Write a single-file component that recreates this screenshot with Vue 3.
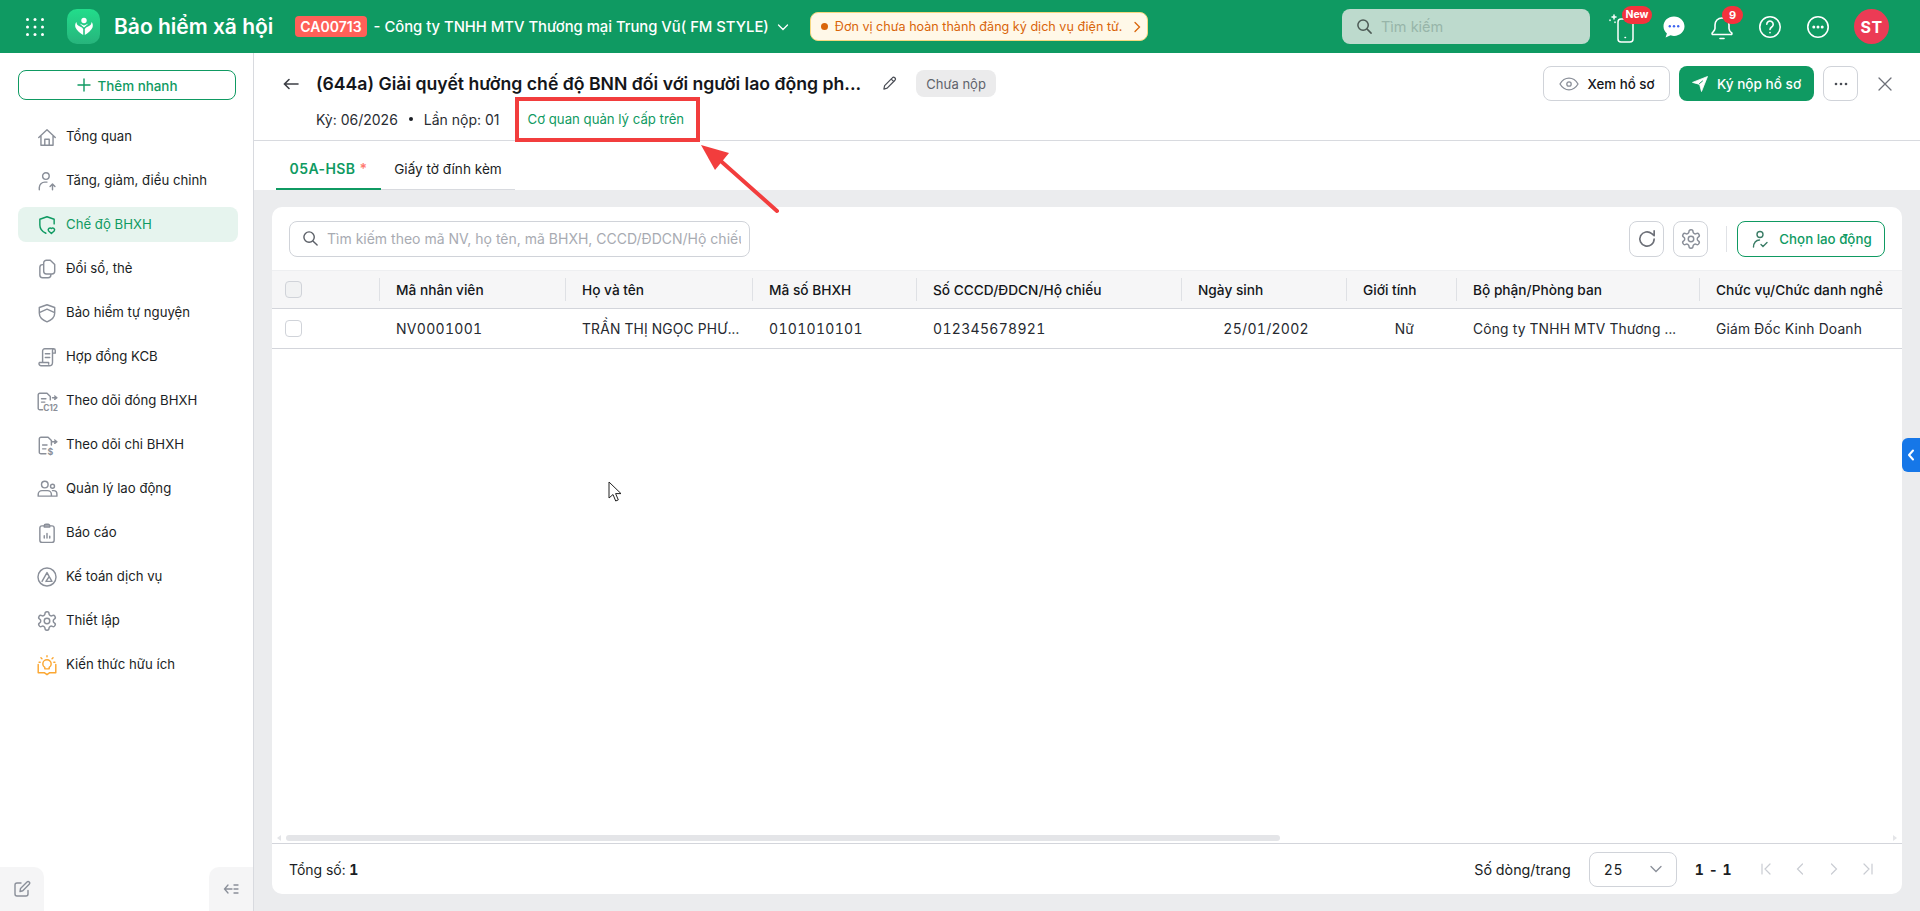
<script setup>
const gear = '<g transform="scale(.833)" stroke-width="1.600"><path d="M12.220 2h-.440a2 2 0 0 0-2 2v.180a2 2 0 0 1-1 1.730l-.430.250a2 2 0 0 1-2 0l-.150-.080a2 2 0 0 0-2.730.730l-.220.380a2 2 0 0 0 .730 2.730l.150.100a2 2 0 0 1 1 1.720v.510a2 2 0 0 1-1 1.740l-.150.090a2 2 0 0 0-.730 2.730l.220.380a2 2 0 0 0 2.730.730l.150-.080a2 2 0 0 1 2 0l.430.250a2 2 0 0 1 1 1.730V20a2 2 0 0 0 2 2h.440a2 2 0 0 0 2-2v-.180a2 2 0 0 1 1-1.730l.430-.250a2 2 0 0 1 2 0l.150.080a2 2 0 0 0 2.730-.730l.220-.390a2 2 0 0 0-.730-2.730l-.150-.080a2 2 0 0 1-1-1.740v-.500a2 2 0 0 1 1-1.740l.150-.090a2 2 0 0 0 .730-2.730l-.220-.380a2 2 0 0 0-2.730-.730l-.150.080a2 2 0 0 1-2 0l-.430-.250a2 2 0 0 1-1-1.730V4a2 2 0 0 0-2-2z"/><circle cx="12" cy="12" r="3"/></g>';

const menu = [
  { label: 'Tổng quan', icon: '<path d="M2.500 10.500 10 3.500l7.500 7M4.500 9v8.500h11V9M8 17.500v-5.500h4v5.500"/>' },
  { label: 'Tăng, giảm, điều chỉnh', icon: '<circle cx="9" cy="5.500" r="3"/><path d="M3 18v-2a5 5 0 0 1 5-5h2M15 18v-5M12.800 15l2.200-2.200 2.200 2.200"/>' },
  { label: 'Chế độ BHXH', active: true, icon: '<path d="M9 17.500C5.500 16 3.500 13.500 3.500 10V4.800L10 2.500l6.500 2.300V9"/><path d="M14 17.800l-2.700-2.600a1.700 1.700 0 0 1 2.700-2 1.700 1.700 0 0 1 2.700 2z"/>' },
  { label: 'Đổi sổ, thẻ', icon: '<path d="M7 4.500A2.500 2.500 0 0 1 9.500 2H13l4 4v6a2.500 2.500 0 0 1-2.500 2.500H9.500A2.500 2.500 0 0 1 7 12zM7 6H6a2.500 2.500 0 0 0-2.500 2.500v7A2.500 2.500 0 0 0 6 18h5a2.500 2.500 0 0 0 2.500-2.500v-1"/>' },
  { label: 'Bảo hiểm tự nguyện', icon: '<path d="M10 2.500 17 5v5c0 4-3 6.500-7 8-4-1.500-7-4-7-8V5z"/><path d="M3.500 9.500 10 6.500l6.500 3"/>' },
  { label: 'Hợp đồng KCB', icon: '<path d="M6 15V4.500A2 2 0 0 1 8 2.500h8a1.500 1.500 0 0 1 1.500 1.500v2.500H15V4M16 2.500a1.500 1.500 0 0 0-1 1.500v11a3 3 0 0 1-3 3H4.500A2 2 0 0 1 3 15h8.500v1.500M8.500 7h4M8.500 10.500h4"/>' },
  { label: 'Theo dõi đóng BHXH', icon: '<path d="M6 18H3.500A1.500 1.500 0 0 1 2 16.500v-12A1.500 1.500 0 0 1 3.500 3H10l3 3v3M5 8h4M5 11h3M15 7h4M17 5.500 19 7l-2 1.500"/><text x="6.500" y="19" font-size="7.500" font-weight="700" fill="currentColor" stroke="none" font-family="Inter, sans-serif">C12</text>' },
  { label: 'Theo dõi chi BHXH', icon: '<path d="M9 18H4.500A1.500 1.500 0 0 1 3 16.500v-12A1.500 1.500 0 0 1 4.500 3H11l3 3v4M6 10h4M6 13.500h3M15 7h4M17 5.500 19 7l-2 1.500"/><text x="10.500" y="19.500" font-size="8" font-weight="700" fill="currentColor" stroke="none" font-family="Inter, sans-serif">$</text>' },
  { label: 'Quản lý lao động', icon: '<circle cx="8" cy="6" r="3"/><circle cx="15" cy="7.500" r="1.800"/><path d="M2 16.500V15a3.500 3.500 0 0 1 3.500-3.500h5A3.500 3.500 0 0 1 14 15v1.500zM15 11.500h1A3 3 0 0 1 19 14.500v2h-5"/>' },
  { label: 'Báo cáo', icon: '<rect x="3.500" y="3.500" width="13" height="15" rx="2"/><path d="M7.500 3.500a1.500 1.500 0 0 1 1.500-1.500h2a1.500 1.500 0 0 1 1.500 1.500v1h-5zM7.500 14.500v-2M10 14.500v-4M12.500 14.500v-1.500"/>' },
  { label: 'Kế toán dịch vụ', icon: '<circle cx="10" cy="10" r="8.200"/><path d="M5.500 14 10 6l2 3.600-3 4.400M10 14h4.500L12 9.600"/>' },
  { label: 'Thiết lập', icon: gear },
  { label: 'Kiến thức hữu ích', warm: true, icon: '<path d="M2 9.500V17h5.500l2.500 1.800 2.500-1.800H18V9.500"/><path d="M8 13.500v-1.300A3.800 3.800 0 0 1 6.200 9a3.800 3.800 0 0 1 7.600 0 3.800 3.800 0 0 1-1.800 3.200v1.300z"/><path d="M10 1.500v1M4.500 3.500l.900.900M15.500 3.500l-.900.900M2.800 7.500h1M16.200 7.500h1"/>' }
];

const columns = [
  { key: 'select', width: 108 },
  { key: 'code', label: 'Mã nhân viên', value: 'NV0001001', width: 186 },
  { key: 'name', label: 'Họ và tên', value: 'TRẦN THỊ NGỌC PHƯ...', width: 187 },
  { key: 'bhxh', label: 'Mã số BHXH', value: '0101010101', width: 164 },
  { key: 'cccd', label: 'Số CCCD/ĐDCN/Hộ chiếu', value: '012345678921', width: 265 },
  { key: 'dob', label: 'Ngày sinh', value: '25/01/2002', width: 165 },
  { key: 'sex', label: 'Giới tính', value: 'Nữ', width: 110 },
  { key: 'dept', label: 'Bộ phận/Phòng ban', value: 'Công ty TNHH MTV Thương ...', width: 243 },
  { key: 'job', label: 'Chức vụ/Chức danh nghề', value: 'Giám Đốc Kinh Doanh', width: 202 }
];
</script>

<template>
  <div class="app">
    <header class="topbar">
      <svg class="grid-ico" width="18" height="18" viewBox="0 0 18 18" fill="#fff">
        <template v-for="y in [1.500, 9, 16.500]" :key="y">
          <circle v-for="x in [1.500, 9, 16.500]" :key="x" :cx="x" :cy="y" r="1.500" />
        </template>
      </svg>
      <div class="logo">
        <svg width="22" height="22" viewBox="0 0 22 22" fill="#fff">
          <circle cx="11" cy="4.500" r="2.700" />
          <path d="M3.500 6c0 2 .8 3.200 2.500 4l3 1.500 1.200 1.500v6C7 17 4 14.500 2.500 11.500 1.800 9.500 2.200 7 3.500 6z" />
          <path d="M18.500 6c0 2-.8 3.200-2.500 4l-3 1.500-1.200 1.500v6c3.200-2 6.200-4.500 7.700-7.500.7-2 .3-4.500-1-5.500z" />
          <path d="M6.500 7.500 11 9.500l4.500-2-4.500 4z" />
        </svg>
      </div>
      <span class="brand">Bảo hiểm xã hội</span>
      <span class="code-badge">CA00713</span>
      <span class="company">- Công ty TNHH MTV Thương mại Trung Vũ( FM STYLE)</span>
      <svg class="company-chevron" width="12" height="12" viewBox="0 0 12 12" fill="none" stroke="#fff" stroke-width="1.300" stroke-linecap="round"><path d="M1.500 4 6 8.500 10.500 4" /></svg>
      <div class="notice">
        <span class="notice-dot"></span>
        <span>Đơn vị chưa hoàn thành đăng ký dịch vụ điện tử.</span>
        <svg width="10" height="12" viewBox="0 0 10 12" fill="none" stroke="#d9650a" stroke-width="1.300" stroke-linecap="round"><path d="M3 1.500 7.500 6 3 10.500" /></svg>
      </div>

      <div class="top-search">
        <svg width="17" height="17" viewBox="0 0 18 18" fill="none" stroke="#4d5a55" stroke-width="1.600" stroke-linecap="round"><circle cx="7.500" cy="7.500" r="5.500" /><path d="m11.800 11.800 4.200 4.200" /></svg>
        <span>Tìm kiếm</span>
      </div>

      <div class="top-icons">
        <div class="top-icon phone">
          <svg width="34" height="36" viewBox="0 0 34 36" fill="none" stroke="#fff" stroke-width="1.500" stroke-linecap="round">
            <rect x="9" y="10" width="15" height="23" rx="3" />
            <path d="M16 28.500h.5M5 6v4M3 8h4M1 11v.5M6 13v.5" />
          </svg>
          <span class="pill new">New</span>
        </div>
        <div class="top-icon chat">
          <svg width="26" height="26" viewBox="0 0 26 26">
            <path fill="#fff" d="M13 2.500C6.900 2.500 2.500 6.800 2.500 12.300c0 3 1.300 5.500 3.400 7.300l-1.300 3.900 5-2.200c1.200.4 2.500.6 3.400.6 6.100 0 10.500-4.400 10.500-9.600S19.100 2.500 13 2.500z" />
            <circle cx="8.800" cy="12.300" r="1.200" fill="#3c63f0" /><circle cx="13" cy="12.300" r="1.200" fill="#3c63f0" /><circle cx="17.200" cy="12.300" r="1.200" fill="#3c63f0" />
          </svg>
        </div>
        <div class="top-icon bell">
          <svg width="26" height="30" viewBox="0 0 26 30" fill="none" stroke="#fff" stroke-width="1.600" stroke-linecap="round" stroke-linejoin="round">
            <path d="M13 6c-4.200 0-7 3-7 7v3.500c0 1.500-1.500 3-2.800 4.500-.4.700 0 1.500.8 1.500h18c.8 0 1.200-.8.800-1.500C20.500 19.500 20 18 20 16.500V13c0-4-2.800-7-7-7z" />
            <path d="M11 26.500h4" />
          </svg>
          <span class="pill count">9</span>
        </div>
        <div class="top-icon">
          <svg width="26" height="26" viewBox="0 0 26 26" fill="none" stroke="#fff" stroke-width="1.600" stroke-linecap="round">
            <circle cx="13" cy="13" r="10.200" />
            <path d="M9.800 10.300a3.200 3.200 0 1 1 4.900 2.700c-1 .7-1.700 1.300-1.700 2.500" />
            <path d="M13 18.500v.3" />
          </svg>
        </div>
        <div class="top-icon">
          <svg width="26" height="26" viewBox="0 0 26 26" fill="none" stroke="#fff" stroke-width="1.600">
            <circle cx="13" cy="13" r="10.200" />
            <circle cx="8.800" cy="13" r=".7" fill="#fff" /><circle cx="13" cy="13" r=".7" fill="#fff" /><circle cx="17.200" cy="13" r=".7" fill="#fff" />
          </svg>
        </div>
      </div>
      <div class="avatar">ST</div>
    </header>

    <div class="body">
      <aside class="sidebar">
        <button class="quick-add">
          <svg width="14" height="14" viewBox="0 0 14 14" stroke="#0f9a62" stroke-width="1.400" stroke-linecap="round"><path d="M7 1v12M1 7h12" /></svg>
          <span>Thêm nhanh</span>
        </button>
        <nav class="menu">
          <div v-for="item in menu" :key="item.label" class="menu-item" :class="{ active: item.active, warm: item.warm }">
            <svg class="menu-ico" width="22" height="22" viewBox="0 0 20 20" fill="none" stroke="currentColor" stroke-width="1.300" stroke-linecap="round" stroke-linejoin="round" v-html="item.icon"></svg>
            <span>{{ item.label }}</span>
          </div>
        </nav>
        <div class="side-foot">
          <div class="foot-btn left">
            <svg width="18" height="18" viewBox="0 0 18 18" fill="none" stroke="#8a8f99" stroke-width="1.400" stroke-linecap="round" stroke-linejoin="round"><path d="M8 3H4a2 2 0 0 0-2 2v9a2 2 0 0 0 2 2h9a2 2 0 0 0 2-2v-3.500" /><path d="M7 11.500 7.500 8.500 14 2a1.500 1.500 0 0 1 2.200 2.200L9.800 10.800z" /></svg>
          </div>
          <div class="foot-btn right">
            <svg width="16" height="14" viewBox="0 0 16 14" fill="none" stroke="#8a8f99" stroke-width="1.300" stroke-linecap="round"><path d="M5 3 1.500 7 5 11M2 7h7M11 3h4M11 7h4M11 11h4" /></svg>
          </div>
        </div>
      </aside>

      <main class="main">
        <section class="doc-head">
          <div class="doc-row">
            <svg class="back" width="16" height="12" viewBox="0 0 16 12" fill="none" stroke="#3c3f45" stroke-width="1.600" stroke-linecap="round"><path d="M15 6H1.500M6 1.500 1.500 6 6 10.500" /></svg>
            <h1 class="doc-title">(644a) Giải quyết hưởng chế độ BNN đối với người lao động ph...</h1>
            <svg class="pen" width="15" height="15" viewBox="0 0 16 16" fill="none" stroke="#4a4d55" stroke-width="1.300" stroke-linejoin="round"><path d="M2 14l.8-3.800L11 2a1.700 1.700 0 0 1 2.800 2.500L5.500 13z" /><path d="M9.800 3.300l2.900 2.700" /></svg>
            <span class="status">Chưa nộp</span>
            <div class="doc-actions">
              <button class="btn outline">
                <svg width="20" height="14" viewBox="0 0 20 14" fill="none" stroke="#8a8f99" stroke-width="1.300"><path d="M1 7c2.200-3.800 5.300-5.800 9-5.800s6.800 2 9 5.800c-2.200 3.800-5.300 5.800-9 5.800S3.200 10.800 1 7z" /><circle cx="10" cy="7" r="2.200" /></svg>
                Xem hồ sơ
              </button>
              <button class="btn primary">
                <svg width="16" height="16" viewBox="0 0 16 16" fill="#fff"><path d="M15.500.5 9.500 15.500 7.600 8.400.5 6.400z" stroke="#fff" stroke-width=".8" stroke-linejoin="round" /><path d="M7.200 7.800l3.600-3" stroke="#0f9a62" stroke-width="1" /></svg>
                Ký nộp hồ sơ
              </button>
              <button class="btn outline square">
                <svg width="14" height="4" viewBox="0 0 14 4" fill="#4a4d55"><circle cx="2" cy="2" r="1.300" /><circle cx="7" cy="2" r="1.300" /><circle cx="12" cy="2" r="1.300" /></svg>
              </button>
              <svg class="close" width="14" height="14" viewBox="0 0 14 14" stroke="#6d7078" stroke-width="1.300" stroke-linecap="round"><path d="M1 1l12 12M13 1 1 13" /></svg>
            </div>
          </div>
          <div class="doc-meta">
            <span>Kỳ: 06/2026</span>
            <span class="bullet"></span>
            <span>Lần nộp: 01</span>
            <a class="parent-link">Cơ quan quản lý cấp trên</a>
          </div>
        </section>

        <div class="tabs">
          <div class="tab on">05A-HSB <i>*</i></div>
          <div class="tab">Giấy tờ đính kèm</div>
        </div>

        <div class="content">
          <section class="card">
            <div class="toolbar">
              <div class="search">
                <svg width="17" height="17" viewBox="0 0 18 18" fill="none" stroke="#5c6068" stroke-width="1.500" stroke-linecap="round"><circle cx="7.500" cy="7.500" r="5.500" /><path d="m11.800 11.800 4.200 4.200" /></svg>
                <span>Tìm kiếm theo mã NV, họ tên, mã BHXH, CCCD/ĐDCN/Hộ chiếu</span>
              </div>
              <button class="tool">
                <svg width="22" height="22" viewBox="0 0 20 20" fill="none" stroke="#6d7078" stroke-width="1.500" stroke-linecap="round" stroke-linejoin="round"><path d="M16.500 10a6.500 6.500 0 1 1-2.200-4.900L16.500 7V2.500" /></svg>
              </button>
              <button class="tool">
                <svg width="22" height="22" viewBox="0 0 20 20" fill="none" stroke="#8a8f99" stroke-linecap="round" stroke-linejoin="round" v-html="gear"></svg>
              </button>
              <span class="tool-sep"></span>
              <button class="btn pick">
                <svg width="20" height="20" viewBox="0 0 20 20" fill="none" stroke-width="1.400" stroke-linecap="round"><circle cx="10" cy="5.500" r="3" stroke="#3b7d67" /><path d="M3.500 18c0-4 2.500-7 6-7" stroke="#3b7d67" /><path d="M11 15.500l2 2 4-4" stroke="#3b7d67" /></svg>
                Chọn lao động
              </button>
            </div>

            <div class="table">
              <div class="thead">
                <div v-for="col in columns" :key="col.key" class="th" :style="{ width: col.width + 'px' }">
                  <span v-if="col.key === 'select'" class="check"></span>
                  <span v-else>{{ col.label }}</span>
                </div>
              </div>
              <div class="tr">
                <div v-for="col in columns" :key="col.key" class="td" :class="col.key" :style="{ width: col.width + 'px' }">
                  <span v-if="col.key === 'select'" class="check"></span>
                  <span v-else>{{ col.value }}</span>
                </div>
              </div>
            </div>

            <div class="scroll">
              <span class="arr l"></span>
              <div class="thumb"></div>
              <span class="arr r"></span>
            </div>

            <footer class="foot">
              <span>Tổng số: <b>1</b></span>
              <div class="pager">
                <span class="per-page">Số dòng/trang</span>
                <div class="size">
                  <span>25</span>
                  <svg width="12" height="8" viewBox="0 0 12 8" fill="none" stroke="#8a8f99" stroke-width="1.300" stroke-linecap="round"><path d="M1 1.500 6 6.500 11 1.500" /></svg>
                </div>
                <b class="range">1 - 1</b>
                <div class="pages">
                  <svg width="12" height="12" viewBox="0 0 12 12" fill="none" stroke="#c9ccd2" stroke-width="1.200" stroke-linecap="round"><path d="M2 1v10M10 1 5 6l5 5" /></svg>
                  <svg width="12" height="12" viewBox="0 0 12 12" fill="none" stroke="#c9ccd2" stroke-width="1.200" stroke-linecap="round"><path d="M8.500 1 3.500 6l5 5" /></svg>
                  <svg width="12" height="12" viewBox="0 0 12 12" fill="none" stroke="#c9ccd2" stroke-width="1.200" stroke-linecap="round"><path d="M3.500 1l5 5-5 5" /></svg>
                  <svg width="12" height="12" viewBox="0 0 12 12" fill="none" stroke="#c9ccd2" stroke-width="1.200" stroke-linecap="round"><path d="M2 1l5 5-5 5M10 1v10" /></svg>
                </div>
              </div>
            </footer>
          </section>
        </div>
      </main>
    </div>

    <!-- overlays: the side handle, the annotation drawn on the screenshot and the mouse pointer -->
    <div class="side-handle">
      <svg width="8" height="12" viewBox="0 0 8 12" fill="none" stroke="#fff" stroke-width="2" stroke-linecap="round" stroke-linejoin="round"><path d="M6 1.500 2 6l4 4.500" /></svg>
    </div>
    <div class="mark-box"></div>
    <svg class="mark-arrow" width="100" height="90" viewBox="0 0 100 90">
      <path d="M77 67 14 11" stroke="#f23d3d" stroke-width="4" stroke-linecap="round" />
      <path d="M1 1 29 9 15 26z" fill="#f23d3d" />
    </svg>
    <svg class="pointer" width="14" height="22" viewBox="0 0 14 22">
      <path d="M1 1v16l4-3.500 2.700 6.500 2.600-1.100-2.700-6.300H13z" fill="#fff" stroke="#222" stroke-width="1" stroke-linejoin="round" />
    </svg>
  </div>
</template>

<style>
html, body {
  margin: 0;
  overflow: hidden;
}
</style>

<style scoped>
.app {
  position: relative;
  display: flex;
  flex-direction: column;
  width: 1920px;
  height: 911px;
  overflow: hidden;
  font-family: Inter, "Noto Sans", sans-serif;
  font-size: 13px;
  color: #1b1e24;
  background: #fff;
}

button {
  font-family: inherit;
  cursor: pointer;
}

/* top bar */
.topbar {
  display: flex;
  align-items: center;
  flex: 0 0 53px;
  height: 53px;
  padding-left: 26px;
  color: #fff;
  background: #0f9a62;
  box-sizing: border-box;
}

.logo {
  display: flex;
  align-items: center;
  justify-content: center;
  width: 33px;
  height: 35px;
  margin-left: 23px;
  border-radius: 10px;
  background: linear-gradient(180deg, #22dd8b 0%, #27b47c 100%);
}

.brand {
  margin-left: 14px;
  font-size: 21px;
  font-weight: 600;
  white-space: nowrap;
}

.code-badge {
  margin-left: 22px;
  padding: 0 5px;
  height: 21px;
  line-height: 21px;
  border-radius: 4px;
  font-size: 14px;
  font-weight: 600;
  background: #ff6058;
}

.company {
  margin-left: 7px;
  font-size: 14.800px;
  font-weight: 500;
  white-space: nowrap;
}

.company-chevron {
  margin-left: 8px;
}

.notice {
  display: flex;
  align-items: center;
  gap: 7px;
  width: 338px;
  height: 29px;
  margin-left: 21px;
  padding-left: 10px;
  border: 1px solid #f5d77f;
  border-radius: 8px;
  box-sizing: border-box;
  font-size: 12.600px;
  color: #d9650a;
  background: #fff8e8;
  white-space: nowrap;
}

.notice svg {
  margin-left: 3px;
}

.notice-dot {
  width: 7px;
  height: 7px;
  border-radius: 50%;
  background: #d9650a;
}

.top-search {
  display: flex;
  align-items: center;
  gap: 8px;
  width: 248px;
  height: 35px;
  margin-left: auto;
  padding-left: 14px;
  box-sizing: border-box;
  border-radius: 8px;
  font-size: 14.500px;
  color: #97b5a9;
  background: #bddacd;
}

.top-icons {
  display: flex;
  align-items: center;
  margin-left: 12px;
}

.top-icon {
  position: relative;
  display: flex;
  align-items: center;
  justify-content: center;
  width: 48px;
  height: 40px;
}

.pill {
  position: absolute;
  display: flex;
  align-items: center;
  justify-content: center;
  color: #fff;
  font-weight: 700;
  background: #f4333d;
}

.pill.new {
  top: -1px;
  left: 20px;
  width: 30px;
  height: 18px;
  border-radius: 9px;
  font-size: 10.500px;
}

.pill.count {
  top: -1px;
  left: 24px;
  width: 21px;
  height: 18px;
  border-radius: 9px;
  font-size: 11px;
}

.avatar {
  display: flex;
  align-items: center;
  justify-content: center;
  width: 35px;
  height: 35px;
  margin: 0 31px 0 12px;
  border-radius: 50%;
  font-size: 16px;
  font-weight: 700;
  letter-spacing: .5px;
  background: #ec3b55;
}

/* sidebar */
.body {
  display: flex;
  flex: 1;
  min-height: 0;
}

.sidebar {
  position: relative;
  display: flex;
  flex-direction: column;
  flex: 0 0 254px;
  padding: 17px 15px 0 18px;
  box-sizing: border-box;
  border-right: 1px solid #d8dadf;
}

.quick-add {
  display: flex;
  align-items: center;
  justify-content: center;
  gap: 7px;
  width: 218px;
  height: 30px;
  padding: 0;
  border: 1px solid #0f9a62;
  border-radius: 8px;
  font-size: 13.400px;
  font-weight: 500;
  color: #0f9a62;
  background: #fff;
}

.quick-add span {
  margin-top: 2px;
}

.menu {
  display: flex;
  flex-direction: column;
  gap: 9px;
  margin-top: 19px;
}

.menu-item {
  display: flex;
  align-items: center;
  gap: 8px;
  width: 220px;
  height: 35px;
  padding-left: 18px;
  box-sizing: border-box;
  border-radius: 8px;
  font-size: 13.200px;
  font-weight: 400;
  color: #8a8f99;
}

.menu-item span {
  margin-top: -2px;
  color: #1b1e24;
}

.menu-item.active {
  color: #0f9a62;
  background: #e6f4ee;
}

.menu-item.active span {
  color: #0f9a62;
}

.menu-item.warm {
  color: #fba732;
}

.side-foot {
  position: absolute;
  left: 0;
  right: 0;
  bottom: 0;
  display: flex;
  justify-content: space-between;
}

.foot-btn {
  display: flex;
  align-items: center;
  justify-content: center;
  width: 44px;
  height: 44px;
  background: #f5f5f6;
}

.foot-btn.left {
  border-top-right-radius: 10px;
}

.foot-btn.right {
  border-top-left-radius: 10px;
}

/* document head */
.main {
  display: flex;
  flex-direction: column;
  flex: 1;
  min-width: 0;
}

.doc-head {
  flex: 0 0 88px;
  padding: 13px 18px 0 29px;
  box-sizing: border-box;
  border-bottom: 1px solid #d8dadf;
}

.doc-row {
  display: flex;
  align-items: center;
  height: 35px;
}

.back {
  flex: none;
}

.doc-title {
  margin: 0 0 0 17px;
  font-size: 17.650px;
  font-weight: 600;
  white-space: nowrap;
  color: #14161a;
}

.pen {
  margin-left: 21px;
}

.status {
  display: flex;
  align-items: center;
  height: 27px;
  margin-left: 19px;
  padding: 0 10px;
  border-radius: 8px;
  color: #5f636b;
  background: #ebebec;
}

.doc-actions {
  display: flex;
  align-items: center;
  margin-left: auto;
}

.btn {
  display: flex;
  align-items: center;
  justify-content: center;
  gap: 9px;
  height: 35px;
  padding: 0;
  border-radius: 8px;
  font-size: 13.300px;
  font-weight: 500;
  white-space: nowrap;
}

.btn.outline {
  width: 127px;
  border: 1px solid #d0d3d9;
  color: #14161a;
  background: #fff;
}

.btn.primary {
  width: 135px;
  margin-left: 9px;
  border: 0;
  font-size: 13.600px;
  color: #fff;
  background: #0f9a62;
}

.btn.square {
  width: 35px;
  margin-left: 9px;
}

.close {
  margin: 0 10px 0 20px;
}

.doc-meta {
  display: flex;
  align-items: center;
  height: 24px;
  margin: 6px 0 0 33px;
  font-size: 14px;
  color: #2a2d33;
}

.bullet {
  width: 4px;
  height: 4px;
  margin: 0 11px;
  border-radius: 50%;
  background: #1b1e24;
}

.parent-link {
  margin-left: 28px;
  font-size: 13.200px;
  color: #0f9a62;
}

/* tabs */
.tabs {
  display: flex;
  flex: 0 0 49px;
  margin-left: 22px;
}

.tab {
  display: flex;
  align-items: center;
  justify-content: center;
  width: 134px;
  padding-top: 8px;
  box-sizing: border-box;
  border-bottom: 1px solid #d8dadf;
  font-size: 13.600px;
  font-weight: 400;
}

.tab.on {
  width: 105px;
  border-bottom: 2px solid #0f9a62;
  font-size: 14px;
  font-weight: 600;
  letter-spacing: .4px;
  color: #0f9a62;
}

.tab i {
  margin-left: 4px;
  font-style: normal;
  color: #ff7a70;
}

/* data card */
.content {
  flex: 1;
  min-height: 0;
  padding: 17px 18px 17px 18px;
  background: #ebecee;
}

.card {
  display: flex;
  flex-direction: column;
  height: 100%;
  border-radius: 10px;
  background: #fff;
  overflow: hidden;
}

.toolbar {
  display: flex;
  align-items: center;
  flex: 0 0 63px;
  padding: 0 17px;
  box-sizing: border-box;
}

.search {
  display: flex;
  align-items: center;
  gap: 8px;
  width: 461px;
  height: 36px;
  margin-right: auto;
  padding: 0 8px 0 12px;
  box-sizing: border-box;
  border: 1px solid #d0d3d9;
  border-radius: 8px;
  font-size: 14px;
  color: #a8abb2;
  overflow: hidden;
}

.search svg {
  flex: none;
}

.search span {
  white-space: nowrap;
  overflow: hidden;
}

.tool {
  display: flex;
  align-items: center;
  justify-content: center;
  width: 35px;
  height: 36px;
  margin-left: 9px;
  padding: 0;
  border: 1px solid #d0d3d9;
  border-radius: 8px;
  background: #fff;
}

.tool-sep {
  width: 1px;
  height: 26px;
  margin: 0 10px 0 18px;
  background: #e0e2e6;
}

.btn.pick {
  width: 148px;
  height: 36px;
  border: 1px solid #0f9a62;
  color: #0f9a62;
  background: #fff;
}

.table {
  flex: 1;
  min-height: 0;
  overflow: hidden;
}

.thead,
.tr {
  display: flex;
  box-sizing: border-box;
  border-bottom: 1px solid #d3d5db;
}

.thead {
  height: 39px;
  border-top: 1px solid #eeeff1;
  background: #f6f6f7;
}

.tr {
  height: 40px;
}

.th,
.td {
  display: flex;
  align-items: center;
  flex: none;
  position: relative;
  padding: 0 16px;
  box-sizing: border-box;
  white-space: nowrap;
  overflow: hidden;
}

.th {
  font-size: 13.700px;
  font-weight: 500;
  color: #14161a;
}

.th::after {
  content: "";
  position: absolute;
  right: 0;
  top: 7px;
  bottom: 7px;
  width: 1px;
  background: #dfe1e5;
}

.th:last-child::after {
  display: none;
}

.td {
  font-size: 13.800px;
  letter-spacing: .2px;
  font-variant-numeric: tabular-nums;
  color: #26292f;
}

.td.code,
.td.bhxh,
.td.cccd,
.td.dob {
  font-size: 14px;
  letter-spacing: .3px;
}

.td.dob {
  justify-content: flex-end;
  padding-right: 38px;
}

.td.sex {
  justify-content: flex-end;
  padding-right: 43px;
}

.check {
  width: 17px;
  height: 17px;
  margin-left: -3px;
  box-sizing: border-box;
  border: 1.500px solid #d0d3d9;
  border-radius: 4px;
  background: #fff;
}

.th .check {
  background: #f1f2f3;
}

.scroll {
  display: flex;
  align-items: flex-start;
  flex: 0 0 8px;
  gap: 5px;
  padding: 0 5px;
}

.thumb {
  width: 994px;
  height: 6px;
  border-radius: 3px;
  background: #e4e5e8;
}

.arr {
  width: 0;
  height: 0;
  border-top: 3px solid transparent;
  border-bottom: 3px solid transparent;
}

.arr.l {
  border-right: 4px solid #e4e5e8;
}

.arr.r {
  margin-left: auto;
  border-left: 4px solid #e4e5e8;
}

.foot {
  display: flex;
  align-items: center;
  justify-content: space-between;
  flex: 0 0 51px;
  padding: 0 17px;
  box-sizing: border-box;
  border-top: 1px solid #d3d5db;
  font-size: 14px;
  font-variant-numeric: tabular-nums;
  color: #1b1e24;
}

.foot b {
  font-weight: 700;
}

.pager {
  display: flex;
  align-items: center;
}

.per-page {
  font-size: 14.300px;
}

.size {
  display: flex;
  align-items: center;
  justify-content: space-between;
  width: 88px;
  height: 35px;
  margin-left: 18px;
  padding: 0 14px 0 14px;
  box-sizing: border-box;
  border: 1px solid #d0d3d9;
  border-radius: 8px;
  letter-spacing: .5px;
}

.range {
  margin-left: 18px;
  letter-spacing: .5px;
}

.pages {
  display: flex;
  align-items: center;
  gap: 22px;
  margin: 0 11px 0 28px;
}

/* overlays */
.side-handle {
  position: absolute;
  top: 438px;
  right: 0;
  display: flex;
  align-items: center;
  justify-content: center;
  width: 18px;
  height: 34px;
  border-radius: 6px 0 0 6px;
  background: #1677e8;
}

.mark-box {
  position: absolute;
  left: 515px;
  top: 97px;
  width: 185px;
  height: 45px;
  box-sizing: border-box;
  border: 4px solid #f23d3d;
}

.mark-arrow {
  position: absolute;
  left: 700px;
  top: 144px;
}

.pointer {
  position: absolute;
  left: 608px;
  top: 481px;
}
</style>
